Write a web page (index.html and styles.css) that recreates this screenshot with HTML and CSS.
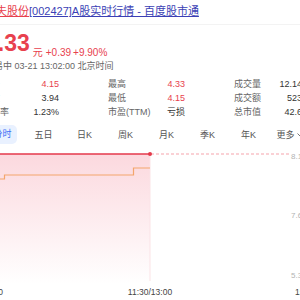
FILE: index.html
```html
<!DOCTYPE html>
<html lang="zh-CN">
<head>
    <meta charset="UTF-8">
    <title>尤夫股份[002427]A股实时行情 - 百度股市通</title>
    <link rel="stylesheet" href="styles.css">
</head>
<body>
    <div class="title-bar">
        <a href="#" class="stock-name">尤夫股份</a><a href="#" class="title-link">[002427]A股实时行情 - 百度股市通</a>
    </div>

    <div class="quote">
        <div class="price-row">
            <span class="price">4.33</span>
            <span class="unit">元</span>
            <span class="change">+0.39</span>
            <span class="change">+9.90%</span>
        </div>
        <div class="status">交易中 03-21 13:02:00 北京时间</div>
    </div>

    <div class="stats">
        <div class="cell"><span class="label">今开</span><span class="value up">4.15</span></div>
        <div class="cell"><span class="label">最高</span><span class="value up">4.33</span></div>
        <div class="cell"><span class="label">成交量</span><span class="value">12.14万</span></div>
        <div class="cell"><span class="label">昨收</span><span class="value">3.94</span></div>
        <div class="cell"><span class="label">最低</span><span class="value up">4.15</span></div>
        <div class="cell"><span class="label">成交额</span><span class="value">523万</span></div>
        <div class="cell"><span class="label">换手率</span><span class="value">1.23%</span></div>
        <div class="cell"><span class="label">市盈(TTM)</span><span class="value">亏损</span></div>
        <div class="cell"><span class="label">总市值</span><span class="value">42.6亿</span></div>
    </div>

    <div class="tabs">
        <span class="tab active"><span class="pill">分时</span></span>
        <span class="tab">五日</span>
        <span class="tab">日K</span>
        <span class="tab">周K</span>
        <span class="tab">月K</span>
        <span class="tab">季K</span>
        <span class="tab">年K</span>
        <span class="tab">更多<svg class="caret" width="6" height="4" viewBox="0 0 6 4"><path d="M0.5 0.5 L3 3 L5.5 0.5" fill="none" stroke="#666" stroke-width="0.9"/></svg></span>
    </div>

    <svg class="chart" width="300" height="155" viewBox="0 145 300 155">
        <defs>
            <linearGradient id="area" x1="0" y1="0" x2="0" y2="1">
                <stop offset="0" stop-color="#f0506a" stop-opacity="0.22"/>
                <stop offset="1" stop-color="#f0506a" stop-opacity="0"/>
            </linearGradient>
        </defs>
        <!-- price area -->
        <rect x="-20" y="153" width="170" height="130" fill="url(#area)"/>
        <line x1="150" y1="153" x2="150" y2="280" stroke="#fbe3e6" stroke-width="1"/>
        <!-- limit line -->
        <line x1="151" y1="153" x2="290" y2="153" stroke="#f5a3ab" stroke-width="1" stroke-dasharray="3 2"/>
        <line x1="-20" y1="153" x2="150" y2="153" stroke="#e4394b" stroke-width="1.3"/>
        <circle cx="150" cy="153" r="2" fill="#e4394b"/>
        <!-- average line -->
        <polyline points="-20,178 4.5,178 4.5,174 133.5,174 133.5,167 150,167" fill="none" stroke="#f4a56c" stroke-width="1.2"/>
        <!-- axis -->
        <text x="291" y="158" class="axis-y">8.13</text>
        <text x="291" y="217" class="axis-y">7.62</text>
        <text x="291" y="277" class="axis-y">5.33</text>
        <text x="3" y="294" class="axis-x" text-anchor="end">9:30</text>
        <text x="150" y="294" class="axis-x" text-anchor="middle">11:30/13:00</text>
        <text x="295" y="294" class="axis-x">15:00</text>
    </svg>
</body>
</html>
```

FILE: styles.css
```css
body {
    margin: 0;
    background-color: #fff;
    font-family: "Liberation Sans", "Noto Sans CJK SC", sans-serif;
    color: #333;
    overflow: hidden;
    width: 300px;
    height: 300px;
}
.title-bar {
    height: 24px;
    line-height: 22px;
    font-size: 11px;
    white-space: nowrap;
    margin-left: -15px;
    border-bottom: 1px solid #f3f3f3;
}
.title-bar a {
    text-decoration: underline;
}
.stock-name {
    color: #e8414e;
}
.title-link {
    color: #3b3fb5;
}
.quote {
    margin-left: -15px;
    padding-top: 6px;
}
.price-row {
    display: flex;
    align-items: flex-end;
    white-space: nowrap;
    color: #e8414e;
}
.price {
    font-size: 23px;
    font-weight: bold;
    line-height: 24px;
    margin-right: 3px;
}
.unit,
.change {
    font-size: 10px;
    line-height: 12px;
    margin-bottom: -4px;
}
.unit {
    margin-right: 3px;
}
.change {
    margin-right: 2px;
}
.status {
    font-size: 9px;
    line-height: 12px;
    color: #666;
    margin-top: 5px;
    white-space: nowrap;
}
.stats {
    display: grid;
    grid-template-columns: repeat(3, 77px);
    column-gap: 49px;
    margin-left: -18px;
    margin-top: 5px;
    font-size: 9px;
    line-height: 14px;
}
.cell {
    display: flex;
    justify-content: space-between;
    white-space: nowrap;
}
.label {
    color: #666;
}
.value {
    color: #333;
}
.value.up {
    color: #e8414e;
}
.tabs {
    display: flex;
    margin-left: -18px;
    margin-top: 6px;
    height: 19px;
    font-size: 9px;
    color: #555;
}
.tab {
    width: 41px;
    flex-shrink: 0;
    display: flex;
    align-items: center;
    justify-content: center;
    white-space: nowrap;
}
.tab .pill {
    display: block;
    width: 28px;
    height: 19px;
    line-height: 19px;
    text-align: center;
    border-radius: 5px;
    background-color: #e9f1ff;
    color: #3b6ff5;
}
.caret {
    margin-left: 2px;
}
.chart {
    display: block;
    margin-top: 2px;
    overflow: visible;
}
.axis-y {
    font-size: 8px;
    fill: #b3b3b3;
}
.axis-x {
    font-size: 8.5px;
    fill: #444;
}
```
